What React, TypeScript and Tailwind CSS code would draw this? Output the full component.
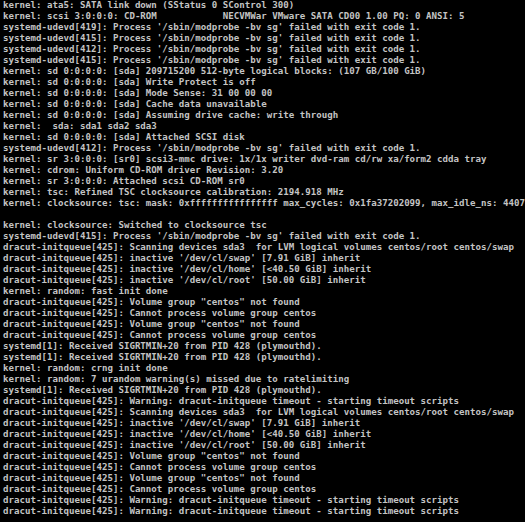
const lines: string[] = [
  "kernel: ata5: SATA link down (SStatus 0 SControl 300)",
  "kernel: scsi 3:0:0:0: CD-ROM            NECVMWar VMware SATA CD00 1.00 PQ: 0 ANSI: 5",
  "systemd-udevd[419]: Process '/sbin/modprobe -bv sg' failed with exit code 1.",
  "systemd-udevd[415]: Process '/sbin/modprobe -bv sg' failed with exit code 1.",
  "systemd-udevd[412]: Process '/sbin/modprobe -bv sg' failed with exit code 1.",
  "systemd-udevd[415]: Process '/sbin/modprobe -bv sg' failed with exit code 1.",
  "kernel: sd 0:0:0:0: [sda] 209715200 512-byte logical blocks: (107 GB/100 GiB)",
  "kernel: sd 0:0:0:0: [sda] Write Protect is off",
  "kernel: sd 0:0:0:0: [sda] Mode Sense: 31 00 00 00",
  "kernel: sd 0:0:0:0: [sda] Cache data unavailable",
  "kernel: sd 0:0:0:0: [sda] Assuming drive cache: write through",
  "kernel:  sda: sda1 sda2 sda3",
  "kernel: sd 0:0:0:0: [sda] Attached SCSI disk",
  "systemd-udevd[412]: Process '/sbin/modprobe -bv sg' failed with exit code 1.",
  "kernel: sr 3:0:0:0: [sr0] scsi3-mmc drive: 1x/1x writer dvd-ram cd/rw xa/form2 cdda tray",
  "kernel: cdrom: Uniform CD-ROM driver Revision: 3.20",
  "kernel: sr 3:0:0:0: Attached scsi CD-ROM sr0",
  "kernel: tsc: Refined TSC clocksource calibration: 2194.918 MHz",
  "kernel: clocksource: tsc: mask: 0xffffffffffffffff max_cycles: 0x1fa37202099, max_idle_ns: 4407",
  "",
  "kernel: clocksource: Switched to clocksource tsc",
  "systemd-udevd[415]: Process '/sbin/modprobe -bv sg' failed with exit code 1.",
  "dracut-initqueue[425]: Scanning devices sda3  for LVM logical volumes centos/root centos/swap",
  "dracut-initqueue[425]: inactive '/dev/cl/swap' [7.91 GiB] inherit",
  "dracut-initqueue[425]: inactive '/dev/cl/home' [<40.50 GiB] inherit",
  "dracut-initqueue[425]: inactive '/dev/cl/root' [50.00 GiB] inherit",
  "kernel: random: fast init done",
  "dracut-initqueue[425]: Volume group \"centos\" not found",
  "dracut-initqueue[425]: Cannot process volume group centos",
  "dracut-initqueue[425]: Volume group \"centos\" not found",
  "dracut-initqueue[425]: Cannot process volume group centos",
  "systemd[1]: Received SIGRTMIN+20 from PID 428 (plymouthd).",
  "systemd[1]: Received SIGRTMIN+20 from PID 428 (plymouthd).",
  "kernel: random: crng init done",
  "kernel: random: 7 urandom warning(s) missed due to ratelimiting",
  "systemd[1]: Received SIGRTMIN+20 from PID 428 (plymouthd).",
  "dracut-initqueue[425]: Warning: dracut-initqueue timeout - starting timeout scripts",
  "dracut-initqueue[425]: Scanning devices sda3  for LVM logical volumes centos/root centos/swap",
  "dracut-initqueue[425]: inactive '/dev/cl/swap' [7.91 GiB] inherit",
  "dracut-initqueue[425]: inactive '/dev/cl/home' [<40.50 GiB] inherit",
  "dracut-initqueue[425]: inactive '/dev/cl/root' [50.00 GiB] inherit",
  "dracut-initqueue[425]: Volume group \"centos\" not found",
  "dracut-initqueue[425]: Cannot process volume group centos",
  "dracut-initqueue[425]: Volume group \"centos\" not found",
  "dracut-initqueue[425]: Cannot process volume group centos",
  "dracut-initqueue[425]: Warning: dracut-initqueue timeout - starting timeout scripts",
  "dracut-initqueue[425]: Warning: dracut-initqueue timeout - starting timeout scripts",
];

export default function App() {
  return (
    <div className="w-[525px] h-[522px] bg-black overflow-hidden pl-[3px] pt-0">
      <div className="font-['DejaVu_Sans_Mono',monospace] text-[9.1px] leading-[11px] text-[#c4c4c4] font-bold tracking-[0.02px] whitespace-pre">
        {lines.map((l, i) => (
          <div key={i} className="h-[11px]">
            {l}
          </div>
        ))}
      </div>
    </div>
  );
}
